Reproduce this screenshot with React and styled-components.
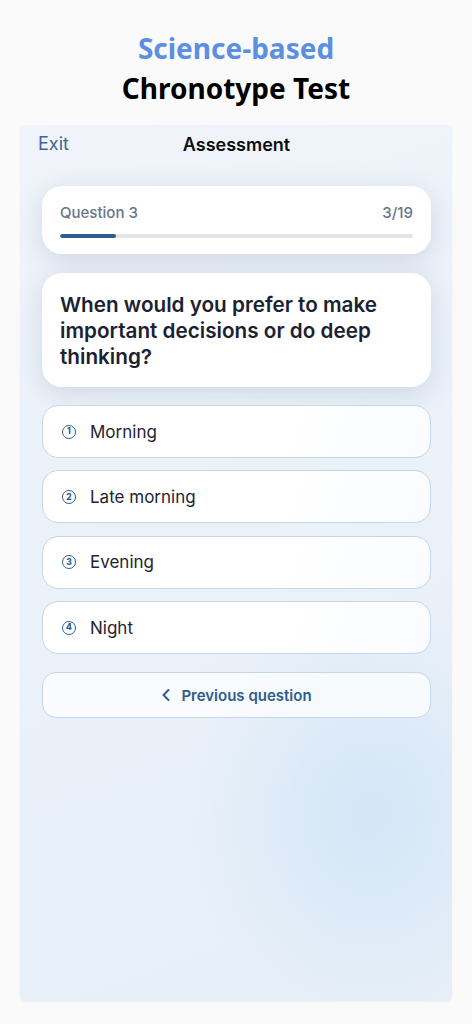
import React from "react";
import styled, { createGlobalStyle } from "styled-components";

const Global = createGlobalStyle`
  html, body { margin: 0; padding: 0; background: #fafafa; }
  body { font-family: Inter, "Noto Sans", sans-serif; -webkit-font-smoothing: antialiased; }
  * { box-sizing: border-box; }
`;

const Page = styled.div`
  width: 472px;
  min-height: 1024px;
  display: flex;
  flex-direction: column;
  align-items: stretch;
  background: #fafafa;
`;

const Hero = styled.h1`
  margin: 0;
  padding-top: 28px;
  text-align: center;
  font-family: "Noto Sans", sans-serif;
  font-weight: 700;
  font-size: 28px;
  line-height: 40px;
  color: #000;
`;

const HeroAccent = styled.span`
  display: block;
  color: #5b8fe2;
`;

const Phone = styled.div`
  margin: 17px 20px 0;
  height: 876px;
  border-radius: 0 0 5px 5px;
  background:
    radial-gradient(ellipse 240px 280px at 350px 690px, rgba(210,229,247,0.95), rgba(210,229,247,0) 75%),
    linear-gradient(160deg, #f1f4fa 0%, #eaf1f9 45%, #e7eff8 100%);
  box-shadow: 0 1px 2px rgba(0,0,0,0.04);
  padding: 0 21px 0 22px;
  display: flex;
  flex-direction: column;
`;

const TopBar = styled.div`
  position: relative;
  height: 38px;
  display: flex;
  align-items: center;
  justify-content: center;
`;

const Exit = styled.span`
  position: absolute;
  left: -4px;
  font-size: 18px;
  color: #3b6897;
  line-height: 38px;
`;

const BarTitle = styled.span`
  font-size: 18px;
  font-weight: 600;
  color: #0d0d0d;
`;

const Card = styled.div`
  background: #ffffff;
  border-radius: 20px;
  box-shadow: 0 6px 26px rgba(110, 130, 165, 0.24);
`;

const ProgressCard = styled(Card)`
  margin-top: 23px;
  height: 68px;
  padding: 17px 18px 0;
  display: flex;
  flex-direction: column;
`;

const ProgressRow = styled.div`
  display: flex;
  justify-content: space-between;
  font-size: 15px;
  font-weight: 500;
  color: #66758c;
  line-height: 20px;
`;

const Track = styled.div`
  margin-top: 11px;
  height: 4px;
  border-radius: 2px;
  background: #e3e5e9;
  overflow: hidden;
`;

const Fill = styled.div`
  height: 100%;
  border-radius: 2px;
  background: #2e5d91;
`;

const QuestionCard = styled(Card)`
  margin-top: 19px;
  height: 114px;
  padding: 19px 18px 0;
`;

const QuestionText = styled.p`
  margin: 0;
  font-size: 20.7px;
  font-weight: 600;
  line-height: 26px;
  color: #1b2232;
`;

const Options = styled.div`
  margin-top: 18px;
  display: flex;
  flex-direction: column;
  gap: 12.4px;
`;

const Option = styled.button`
  height: 53px;
  border: 1px solid #c8d5e5;
  border-radius: 16px;
  background: linear-gradient(110deg, #ffffff 0%, #ffffff 60%, #f9fbfe 100%);
  display: flex;
  align-items: center;
  gap: 14px;
  padding: 0 0 0 19px;
  font-family: Inter, sans-serif;
  font-size: 17px;
  color: #1e2433;
  text-align: left;
  cursor: pointer;
`;

const Num = styled.span`
  width: 14px;
  height: 14px;
  border: 1.7px solid #2e5d91;
  border-radius: 50%;
  display: inline-flex;
  align-items: center;
  justify-content: center;
  font-size: 8.5px;
  font-weight: 800;
  color: #2e5d91;
  line-height: 1;
`;

const PrevButton = styled.button`
  margin-top: 18px;
  height: 46px;
  border: 1px solid #c8d5e5;
  border-radius: 14px;
  background: rgba(255, 255, 255, 0.72);
  display: flex;
  align-items: center;
  justify-content: center;
  gap: 10px;
  font-family: Inter, sans-serif;
  font-size: 15px;
  font-weight: 600;
  color: #2e5d91;
  cursor: pointer;
`;

const options = ["Morning", "Late morning", "Evening", "Night"];

export default function App() {
  const current = 3;
  const total = 19;
  return (
    <Page>
      <Global />
      <Hero>
        <HeroAccent>Science-based</HeroAccent>
        Chronotype Test
      </Hero>
      <Phone>
        <TopBar>
          <Exit>Exit</Exit>
          <BarTitle>Assessment</BarTitle>
        </TopBar>
        <ProgressCard>
          <ProgressRow>
            <span>Question {current}</span>
            <span>{current}/{total}</span>
          </ProgressRow>
          <Track>
            <Fill style={{ width: `${(current / total) * 100}%` }} />
          </Track>
        </ProgressCard>
        <QuestionCard>
          <QuestionText>
            When would you prefer to make important decisions or do deep thinking?
          </QuestionText>
        </QuestionCard>
        <Options>
          {options.map((o, i) => (
            <Option key={o}>
              <Num>{i + 1}</Num>
              {o}
            </Option>
          ))}
        </Options>
        <PrevButton>
          <svg width="10" height="14" viewBox="0 0 10 14" fill="none">
            <path d="M7.5 2 L2.5 7 L7.5 12" stroke="#2e5d91" strokeWidth="2" strokeLinecap="round" strokeLinejoin="round" />
          </svg>
          Previous question
        </PrevButton>
      </Phone>
    </Page>
  );
}
